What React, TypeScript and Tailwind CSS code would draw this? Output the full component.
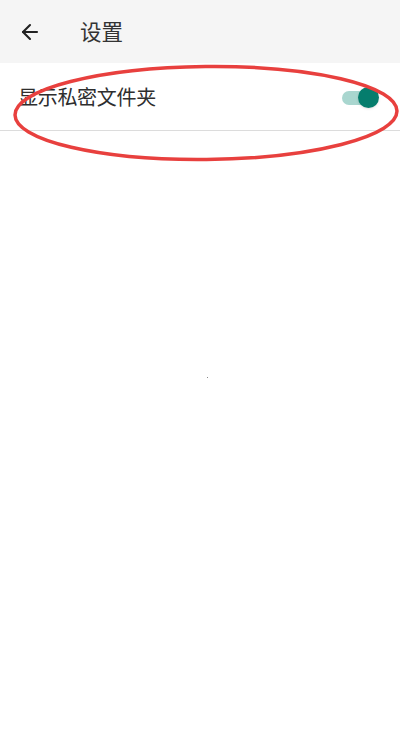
import React from 'react'
import { ArrowLeft } from 'lucide-react'

const font = { fontFamily: '"Noto Sans CJK SC", "Noto Sans", sans-serif' }

const Toggle = () => {
  return (
    <div className="relative w-[37px] h-[20px]">
      <div className="absolute left-0 top-[4px] w-[31px] h-[14px] rounded-full bg-[#a9d6cf]" />
      <div className="absolute right-0 top-0 w-[21px] h-[21px] rounded-full bg-[#057d6d] shadow-sm" />
    </div>
  )
}

const App = () => {
  return (
    <div className="relative w-[400px] h-[742px] bg-white overflow-hidden" style={font}>
      <div className="h-[63px] bg-[#f5f5f5] flex items-center">
        <ArrowLeft className="ml-[18px] w-[24px] h-[24px] text-[#222]" strokeWidth={2.1} />
        <h1 className="ml-[38px] text-[21.5px] text-[#333]">设置</h1>
      </div>
      <div className="h-[68px] flex items-center justify-between pl-[18px] pr-[21px] border-b border-[#dcdcdc]">
        <span className="text-[20px] text-[#2e2e2e] tracking-[-0.3px]">显示私密文件夹</span>
        <Toggle />
      </div>
      <div className="absolute left-[207px] top-[377px] w-[1px] h-[1px] bg-[#888]" />
      <svg className="absolute left-0 top-0 pointer-events-none" width="400" height="200" viewBox="0 0 400 200">
        <ellipse cx="206" cy="113" rx="191" ry="46.5" fill="none" stroke="#e8403e" strokeWidth="3.5" transform="rotate(-0.6 206 113)" />
      </svg>
    </div>
  )
}

export default App
